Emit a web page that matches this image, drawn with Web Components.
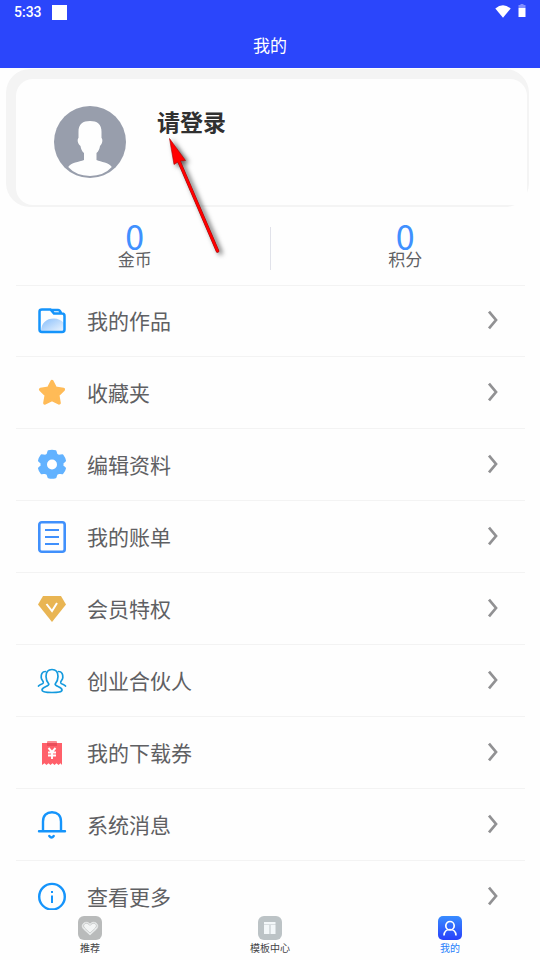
<!DOCTYPE html>
<html lang="zh-CN">
<head>
<meta charset="utf-8">
<title>我的</title>
<style>
html,body{margin:0;padding:0}
body{width:540px;height:960px;overflow:hidden;background:#fefefe;font-family:"Noto Sans CJK SC",sans-serif;color:#5f6063}
</style>
</head>
<body>
<profile-page></profile-page>
<script>
const define = (name, markup) => customElements.define(name, class extends HTMLElement {
  constructor() {
    super();
    const t = document.createElement('template');
    t.innerHTML = markup;
    this.attachShadow({mode: 'open'}).append(t.content.cloneNode(true));
  }
});

define('status-bar', `
<style>
:host{display:flex;align-items:center;height:25px;padding:0 14px;color:#fff;font:500 14px/25px Roboto,sans-serif}
.box{width:15px;height:15px;background:#fff;margin-left:10px}
.gap{flex:1}
svg{display:block}
.wifi{margin:-3px 7px 0 0}.bat{margin-top:-4px}
</style>
<span>5:33</span><span class="box"></span><span class="gap"></span>
<svg class="wifi" width="16" height="13" viewBox="0 0 16 13"><path fill="#fff" d="M0.3 3.5Q8-2.8 15.7 3.5L8 12.8Z"/></svg>
<svg class="bat" width="8" height="13" viewBox="0 0 8 13"><path fill="#808eff" d="M2.5 0h3v1H7.500v3H.5V1h2z"/><path fill="#fff" d="M.5 4h7v9h-7z"/></svg>`);

define('page-header', `
<style>
:host{display:block;height:68px;background:#2b46fb}
h1{margin:0;height:43px;font-size:17px;line-height:39px;font-weight:400;text-align:center;color:#fff}
</style>
<status-bar></status-bar><h1><slot></slot></h1>`);

define('user-card', `
<style>
:host{display:block;box-sizing:border-box;margin:1px 11px 0 6px;height:138px;padding:10px 2px 2px 10px;background:#f4f4f4;border-radius:24px}
.in{box-sizing:border-box;display:flex;height:126px;border-radius:17px 17px 10px 17px;background:#fefefe;padding:27px 0 0 38px}
svg{display:block;width:72px;height:72px}
b{margin:-2px 0 0 31px;font-size:23px;line-height:34px;color:#303030;font-weight:700}
</style>
<div class="in">
<svg viewBox="0 0 72 72"><circle cx="36" cy="36" r="36" fill="#989eac"/><path fill="#fefefe" d="M36 15C29 15 24.300 18 24.500 26V32C23 33 23.500 38 26.500 40C27 43 28 45.500 30 47V54C25 56 17 56.500 14.200 61Q22 69.800 36 70Q50 69.800 57.800 61C55 56.500 47 56 42.500 54V47C44.500 45.500 45.500 43 46 40C48.500 38 49 33 47.500 32V26C47.700 18 43 15 36 15Z"/></svg>
<b><slot></slot></b></div>`);

define('stat-item', `
<style>
:host{flex:1;display:flex;flex-direction:column;align-items:center}
strong{font-size:34px;line-height:28px;font-weight:400;color:#4090ff}
span{font-size:17px;line-height:24px;margin-top:-3px;color:#606164}
</style>
<strong><slot name="value"></slot></strong><span><slot></slot></span>`);

define('stat-row', `
<style>
:host{display:flex;height:78px;box-sizing:border-box;padding:15px 0 0 0}
i{width:1px;height:43px;margin-top:5px;background:#e1e2ea}
</style>
<stat-item><span slot="value">0</span>金币</stat-item><i></i><stat-item><span slot="value">0</span>积分</stat-item>`);

define('menu-item', `
<style>
:host{display:flex;align-items:center;flex:none;box-sizing:border-box;height:72px;margin:0 15px 0 16px;padding:0 26px 2px 20px;border-bottom:1px solid #f3f3f3}
.ic{display:flex;width:32px;height:36px}
.t{flex:1;margin-left:19px;font-size:21px;line-height:32px;color:#5f6063}
.a{display:block;margin-top:1px}
</style>
<span class="ic"><slot name="icon"></slot></span><span class="t"><slot></slot></span>
<svg class="a" width="12" height="20" viewBox="0 0 12 20"><path d="M2 1.700L9 10L2 18.300" fill="none" stroke="#919193" stroke-width="2.700"/></svg>`);

define('menu-list', `
<style>
:host{display:flex;flex-direction:column;height:625px;overflow:hidden}
.first{box-shadow:inset 0 1px #f3f3f3}
svg{display:block;width:32px;height:36px}
</style>
<menu-item class="first"><svg slot="icon" viewBox="0 0 32 36"><defs><linearGradient id="g" x1="0" x2="1" y2="1"><stop stop-color="#85bdfb"/><stop offset="1" stop-color="#f1f7fe"/></linearGradient></defs><path d="M5 30C5 21 10 16.500 18 16.500C22 16.500 25 18 28 21V30Z" fill="url(#g)"/><path d="M6 7.500H14.500L18 11.500H26Q28.500 11.500 28.500 14V27.500Q28.500 30 26 30H6Q3.500 30 3.500 27.500V9.500Q3.500 7.500 6 7.500ZM15 8H22Q24 8 25 11" fill="none" stroke="#1594fb" stroke-width="2.500"/></svg>我的作品</menu-item>
<menu-item><svg slot="icon" viewBox="0 0 32 36"><path d="M16 7.500L19.500 14.200L27.400 15.500L21.800 21.100L23.200 29L16 25.500L8.800 29L10.200 21.100L4.600 15.500L12.500 14.200Z" fill="#ffbb57" stroke="#ffbb57" stroke-width="3.300" stroke-linejoin="round"/></svg>收藏夹</menu-item>
<menu-item><svg slot="icon" viewBox="0 0 32 36"><path fill="#62b2ff" stroke="#62b2ff" stroke-width="2" stroke-linejoin="round" d="M12.500 5.200Q16 4.200 19.500 5.200L20.500 8.600L23 9.800L26.500 9.300Q28.500 12 29 14.700L26.500 17V20L29 22.300Q28.500 25 26.300 27.300L23 26.800L20.500 28.100L19.500 31.300Q16 32.300 12.500 31.300L11.500 28.100L9 26.800L5.600 27.300Q3.500 25 3 22.300L5.500 20V17L3 14.700Q3.500 12 5.500 9.300L9 9.800L11.500 8.600Z"/><circle cx="16" cy="18.500" r="5" fill="#fff"/></svg>编辑资料</menu-item>
<menu-item><svg slot="icon" viewBox="0 0 32 36"><g fill="none" stroke="#4090fc"><rect x="3.300" y="4.300" width="25.400" height="29.400" rx="2.500" stroke-width="2.600"/><path stroke-width="2" d="M9 12H23M9 19H23M9 26H23"/></g></svg>我的账单</menu-item>
<menu-item><svg slot="icon" viewBox="0 0 32 36"><path d="M7 6H25L30 14.500L16 32L2 14.500Z" fill="#e9b553"/><path d="M10.500 14L16 21L21 13" fill="none" stroke="#fff" stroke-width="2"/></svg>会员特权</menu-item>
<menu-item><svg slot="icon" viewBox="0 0 32 36"><g fill="none" stroke="#149ade" stroke-width="1.700" stroke-linejoin="round" stroke-linecap="round"><path d="M16 7.500C12 7.500 10 10 10 14.500C10 18.500 11 20 12.800 22C13.500 24.500 6 24.500 6 28C6 30 10 30.500 16 30.500S26 30 26 28C26 24.500 18.500 24.500 19.200 22C21 20 22 18.500 22 14.500C22 10 20 7.500 16 7.500Z"/><path d="M9.500 9.500C6 9.500 5 12.500 5.200 15.500C5.300 18.500 8 19 7.200 21C6.500 22.500 4 22 2.500 24M22.500 9.500C26 9.500 27 12.500 26.800 15.500C26.700 18.500 24 19 24.800 21C25.500 22.500 28 22 29.500 24"/></g></svg>创业合伙人</menu-item>
<menu-item><svg slot="icon" viewBox="0 0 32 36"><path d="M6 9H26V31L24.500 29.200L22.500 31L20.500 29.200L18.500 31L16.500 29.200L14.500 31L12.500 29.200L10.500 31L8.500 29.200L6 31Z" fill="#ff606a"/><rect x="11" y="7" width="10" height="5" rx="1" fill="#fb8b91"/><path d="M11 9H21V12H11Z" fill="#ec4d59"/><path d="M12.500 14L16 18L19.500 14M12 18.500H20M12 21.500H20M16 18V25" fill="none" stroke="#fff" stroke-width="1.900"/></svg>我的下载券</menu-item>
<menu-item><svg slot="icon" viewBox="0 0 32 36"><g fill="none" stroke="#1594fb" stroke-width="2.400" stroke-linecap="round"><path d="M3 25.300H29M7 25V15.500C7 9.500 10.500 6.200 16 6.200S25 9.500 25 15.500V25"/><path d="M13.300 30Q15.500 33 17.700 30"/></g></svg>系统消息</menu-item>
<menu-item><svg slot="icon" viewBox="0 0 32 36"><circle cx="16" cy="18.700" r="12.800" fill="none" stroke="#1594fb" stroke-width="2.400"/><path d="M15 13h2v2h-2zM15 17.500h2v7.500h-2z" fill="#1594fb"/></svg>查看更多</menu-item>`);

define('tab-item', `
<style>
:host{flex:1;display:flex;flex-direction:column;align-items:center;padding-top:6px;color:#444446;font-size:10px;line-height:14px}
:host([active]){color:#287ffb}
.ic{display:block;width:24px;height:24px;margin-bottom:1px}
</style>
<span class="ic"><slot name="icon"></slot></span><span><slot></slot></span>`);

define('tab-bar', `
<style>
:host{display:flex;height:50px;background:#fefefe}
svg{display:block;width:24px;height:24px}
</style>
<tab-item><svg slot="icon" viewBox="0 0 24 24"><rect width="24" height="24" rx="6" fill="#b9bbbb"/><path d="M12 19L5.500 13C1.500 8.500 8 3.500 12 8C16 3.500 22.500 8.500 18.500 13Z" fill="#f3f5f5" stroke="#e5e7e7" stroke-width=".8"/><path d="M12 17.200L6.500 12C3.500 8.500 8.500 5 12 9.400C15.500 5 20.500 8.500 17.500 12Z" fill="none" stroke="#b9bbbb" stroke-width=".8"/></svg>推荐</tab-item>
<tab-item><svg slot="icon" viewBox="0 0 24 24"><rect width="24" height="24" rx="6" fill="#bcc3c6"/><path fill="#f3f7f9" d="M6 6h11.500v2.500H6zM6 9h5.500v9H6zM12.500 9h5v9h-5z"/></svg>模板中心</tab-item>
<tab-item active><svg slot="icon" viewBox="0 0 24 24"><defs><linearGradient id="b" x2="0" y2="1"><stop stop-color="#388cff"/><stop offset="1" stop-color="#2940fb"/></linearGradient></defs><rect width="24" height="24" rx="5" fill="url(#b)"/><g fill="none" stroke="#fff" stroke-width="1.700"><circle cx="12" cy="9.700" r="4.200"/><path d="M6 19.500C6 16 8.500 13.500 12 13.500S18 16 18 19.500"/></g></svg>我的</tab-item>`);

define('pointer-arrow', `
<style>
:host{position:absolute;left:160px;top:130px;pointer-events:none}
svg{display:block;filter:drop-shadow(3px 2px 2.500px rgba(0,0,0,.65))}
</style>
<svg width="75" height="135" viewBox="0 0 75 135"><path d="M18 29L57.500 121" stroke="#8e1010" stroke-width="3.400" stroke-linecap="round"/><path d="M9.500 8.500L25.500 30.500L19.500 31L14 34.500Z" fill="#f00" stroke="#a00" stroke-width=".6"/><path d="M18 29L57.500 121" stroke="#f00" stroke-width="2.600" stroke-linecap="round"/></svg>`);

define('profile-page', `
<style>
:host{display:flex;flex-direction:column;position:relative;width:540px;height:960px;background:#fefefe}
</style>
<page-header>我的</page-header><user-card>请登录</user-card><stat-row></stat-row><menu-list></menu-list><tab-bar></tab-bar><pointer-arrow></pointer-arrow>`);
</script>
</body>
</html>
